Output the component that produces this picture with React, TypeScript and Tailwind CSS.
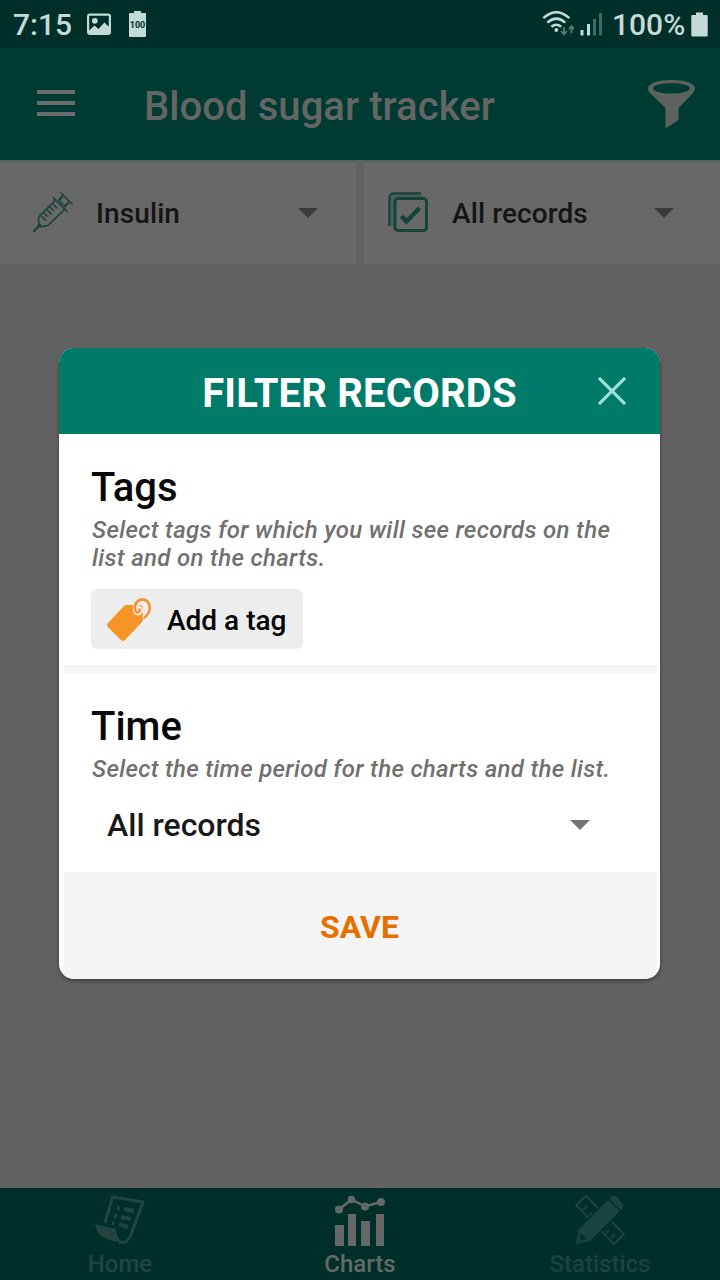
import React from "react";

function Caret({ className }: { className: string }) {
  return (
    <svg width="20" height="10" viewBox="0 0 20 10" className={className}>
      <path d="M0 0H20L10 10Z" fill="currentColor" />
    </svg>
  );
}

function StatusBar() {
  return (
    <div className="flex h-12 shrink-0 items-center justify-between bg-[#002e29] pr-[12px] pl-[13px] text-[#c4dad7]">
      <div className="flex items-center">
        <span className="w-[74px] pt-[2px] text-[30px] leading-[36px] font-medium">7:15</span>
        <svg width="24" height="23" viewBox="0 0 24 23">
          <path
            fillRule="evenodd"
            fill="currentColor"
            d="M3 0.5H21Q24 0.5 24 3.5V19Q24 22 21 22H3Q0 22 0 19V3.5Q0 0.5 3 0.5ZM2.2 2.7V17.5L7.5 12.6L11.4 16L17.4 9.6L21.8 13.8V2.7Z"
          />
          <circle cx="7.8" cy="7.8" r="2.9" fill="currentColor" />
        </svg>
        <div className="ml-[18px] flex flex-col items-center pb-px">
          <div className="h-[2px] w-[7px] bg-[#c4dad7]" />
          <div className="flex h-[24px] w-[17px] items-center justify-center rounded-[1px] bg-[#c4dad7] pt-px text-[9px] leading-none font-bold text-[#002e29]">
            100
          </div>
        </div>
      </div>
      <div className="flex items-center">
        <svg width="32" height="26" viewBox="0 0 32 26" fill="none" stroke="currentColor">
          <path d="M1.3 7.2Q14.3 -4.8 27.3 7.2" strokeWidth="2.5" />
          <path d="M5.3 11.6Q14.3 3.6 23.3 11.6" strokeWidth="2.5" />
          <path d="M9.4 15.8Q14.3 11.6 19.2 15.8" strokeWidth="2.5" />
          <circle cx="14.3" cy="19" r="1.9" fill="currentColor" stroke="none" />
          <path d="M22 16V23M19 20L22 23.3L25 20M29.5 22V15.5M26.8 18.2L29.5 15.2L32 18.2" stroke="#557b76" strokeWidth="1.8" />
        </svg>
        <svg width="23" height="24" viewBox="0 0 23 24" className="ml-[6px]">
          <rect x="0.5" y="18" width="3" height="5.5" fill="#c4dad7" />
          <rect x="7" y="12" width="3" height="11.5" fill="#c4dad7" />
          <rect x="13" y="7" width="3" height="16.5" fill="#406a65" />
          <rect x="19" y="1" width="3" height="22.5" fill="#406a65" />
        </svg>
        <span className="ml-[9px] w-[79px] pt-[2px] text-[30px] leading-[36px] font-medium whitespace-nowrap">100%</span>
        <svg width="17" height="25" viewBox="0 0 17 25">
          <path d="M5 0.5H12V3H15.5Q16.7 3 16.7 4.2V23Q16.7 24.5 15.5 24.5H1.5Q0.3 24.5 0.3 23V4.2Q0.3 3 1.5 3H5Z" fill="currentColor" />
        </svg>
      </div>
    </div>
  );
}

function Toolbar() {
  return (
    <div className="flex h-28 shrink-0 items-center bg-[#003b33] pr-[25px] pl-[37px] text-[#646664]">
      <div className="mb-[2px] flex w-[38px] flex-col gap-[7px]">
        <div className="h-1 bg-[#6b6d6b]" />
        <div className="h-1 bg-[#6b6d6b]" />
        <div className="h-1 bg-[#6b6d6b]" />
      </div>
      <h1 className="ml-[69px] flex-1 pt-[6px] text-[40px] leading-[48px] font-medium tracking-[0.06px] whitespace-nowrap">
        Blood sugar tracker
      </h1>
      <svg width="47" height="49" viewBox="0 0 47 49" fill="#5e625f">
        <path
          fillRule="evenodd"
          d="M23.5 0C36.5 0 47 3.4 47 8.3C47 10.5 45.8 12 44 14L30.5 28V40L17.5 48.5V28L3 14C1.2 12 0 10.5 0 8.3C0 3.4 10.5 0 23.5 0ZM23.5 3.2C13.2 3.2 5 5.2 5 8.3C5 11.4 13.2 13.6 23.5 13.6C33.8 13.6 42 11.4 42 8.3C42 5.2 33.8 3.2 23.5 3.2Z"
        />
      </svg>
    </div>
  );
}

function Syringe() {
  return (
    <svg width="40" height="40" viewBox="0 0 40 40" fill="none" stroke="#17433b" strokeWidth="1.6" strokeLinecap="round" className="ml-px">
      <path d="M1 39L7 33" strokeWidth="2.4" />
      <path d="M22 8.5L7 23.5Q4.5 26.5 6 30.5L5.5 33.5L7.5 35L10.5 34Q14 34.5 16 32.5L32 17" />
      <path d="M20.5 6L34 19.5M28 1L39 12M29 5.5L26 8.5M34.5 11L31.5 14M25.5 8L32.5 15" />
      <path d="M30 3.5L26.5 7M36.5 10L33 13.5" />
      <path d="M20 12L24 16M17 15L20 18M14 18L18 22M11 21L14 24M8.5 24L12.5 28" />
    </svg>
  );
}

function CheckPages() {
  return (
    <svg width="40" height="40" viewBox="0 0 40 40" fill="none" stroke="#17433b" strokeWidth="3">
      <path d="M33 1.5H6Q1.5 1.5 1.5 6V34" strokeWidth="2.4" />
      <path d="M4 34V8Q4 4 8 4H34" stroke="#3e625d" strokeWidth="2.6" />
      <rect x="7" y="6.5" width="31.5" height="32" rx="3" fill="#686868" />
      <path d="M13.5 24L18.5 29.5L31.5 16" strokeWidth="4.6" />
    </svg>
  );
}

function Selector({ icon, label }: { icon: React.ReactNode; label: string }) {
  return (
    <div className="flex flex-1 items-center pb-[2px] text-[28px] font-medium text-[#151515]">
      <div className="w-10">{icon}</div>
      <span className="ml-6 flex-1 pt-[3px] leading-8 tracking-[0.1px]">{label}</span>
      <Caret className="mt-[2px] text-[#3b3b3b]" />
    </div>
  );
}

function TagIcon() {
  return (
    <svg width="46" height="46" viewBox="0 0 46 46">
      <path
        fill="#f79427"
        d="M20.5 9H33.5Q37 9 37 13V23.5Q37 25 36 26L19 44Q17 45.7 15 44L1.7 31Q0 29 2 27L18 10Q19 9 20.5 9Z"
      />
      <circle cx="32" cy="14.5" r="5" fill="#ededed" />
      <path d="M37 22Q44 18 43.6 11Q42.5 3.6 36 3.4Q29.5 4.4 29.2 11Q29.2 16 32.2 15.8" fill="none" stroke="#ededed" strokeWidth="4.6" />
      <path d="M38.5 21.5Q44.4 17 43.6 10.5Q42.4 3.4 36 3.4Q29.2 4.4 29 11.5Q29 16.5 32 16.5Q34 16.3 33.6 13.5" fill="none" stroke="#ec963a" strokeWidth="2.6" strokeLinecap="round" />
    </svg>
  );
}

function FilterDialog() {
  return (
    <section className="absolute top-[348px] left-[59px] flex h-[631px] w-[601px] flex-col overflow-hidden rounded-[15px] bg-white shadow-[0_2px_4px_0px_rgba(0,0,0,0.4)]">
      <header className="flex h-[86px] items-center bg-[#007a69] pr-[34px] pl-[62px]">
        <h2 className="flex-1 pt-[6px] text-center text-[40px] leading-[48px] font-bold tracking-[0.2px] whitespace-nowrap text-white">
          FILTER RECORDS
        </h2>
        <svg width="28" height="28" viewBox="0 0 28 28">
          <path d="M1 1L27 27M27 1L1 27" stroke="#9de0d5" strokeWidth="3.2" />
        </svg>
      </header>
      <div className="flex h-[231px] flex-col items-start pt-[30px] pl-[33px]">
        <h3 className="-ml-px text-[40px] leading-[47px] font-medium text-[#080808]">Tags</h3>
        <p className="mt-[5px] text-[24px] leading-[28px] font-medium tracking-[0.33px] whitespace-nowrap text-[#707070] italic">
          Select tags for which you will see records on the
          <br />
          list and on the charts.
        </p>
        <button className="mt-[17px] -ml-px flex h-[60px] w-[212px] items-center rounded-[6px] bg-[#ededed] pl-[15px] text-[28px] font-medium text-black">
          <TagIcon />
          <span className="ml-[15px] pt-[3px] leading-8 whitespace-nowrap">Add a tag</span>
        </button>
      </div>
      <div className="mr-[3px] ml-[5px] h-2 bg-[#f4f4f4]" />
      <div className="flex h-[199px] flex-col pt-[30px] pl-[33px]">
        <h3 className="-ml-px text-[40px] leading-[47px] font-medium text-[#080808]">Time</h3>
        <p className="mt-[5px] text-[24px] leading-[28px] font-medium tracking-[0.31px] whitespace-nowrap text-[#707070] italic">
          Select the time period for the charts and the list.
        </p>
        <div className="mt-[23px] flex items-center justify-between pr-[70px] pl-[15px] text-[32px] leading-[38px] font-medium text-[#191919]">
          All records
          <Caret className="text-[#737373]" />
        </div>
      </div>
      <button className="mr-[3px] ml-[5px] flex-1 bg-[#f4f4f4] pt-[3px] pr-[2px] text-[32px] leading-[38px] font-bold text-[#e66f00]">
        SAVE
      </button>
    </section>
  );
}

function HomeIcon() {
  return (
    <svg width="50" height="50" viewBox="0 0 50 50" fill="none" stroke="currentColor" strokeWidth="3" strokeLinejoin="round">
      <path d="M10 28L17.5 2L48 7L35 42Q31 49 24 47" />
      <path d="M0 29L21 34Q22 45 28 47Q10 46 4 39Q1 35 0 29Z" fill="currentColor" stroke="none" />
      <path d="M22 13L25 13.5M29 14L39 16M19 21L22 21.5M26 22L36 24M17 28L19 28.5M24 29L33 32" strokeWidth="4" />
    </svg>
  );
}

function ChartsIcon() {
  return (
    <svg width="52" height="52" viewBox="0 0 52 52" fill="currentColor">
      <path d="M5 14.5L17.5 4.5L31 11.5L47 7" fill="none" stroke="currentColor" strokeWidth="2.5" />
      <circle cx="5" cy="14.5" r="4" />
      <circle cx="17.5" cy="4.5" r="3.8" />
      <circle cx="31" cy="11.5" r="4" />
      <circle cx="47" cy="7" r="4" />
      <path d="M1 30H10V51H1ZM14 19H22V51H14ZM27 26H36V51H27ZM42 19H50V51H42Z" />
    </svg>
  );
}

function StatisticsIcon() {
  return (
    <svg width="50" height="50" viewBox="0 0 50 50" fill="none" stroke="currentColor" strokeWidth="2.2" strokeLinejoin="round">
      <path d="M1 10L11 1L49 39L39 49Z" />
      <path d="M8 15L12 11M14 21L17 18M31 38L34 35M36 43L40 39" strokeWidth="2" />
      <path d="M36 1Q39 -1 42 1L48 8Q50 11 48 14L15 47L0 50L3 34Z" fill="currentColor" stroke="#002f29" strokeWidth="1.5" />
      <path d="M34 4.5L45.5 16" stroke="#002f29" strokeWidth="1.6" />
      <path d="M5 36L13.5 44.5L3 47.5Z" fill="#002f29" stroke="currentColor" strokeWidth="2" />
      <path d="M1 49L3 42L8 47Z" fill="currentColor" stroke="none" />
    </svg>
  );
}

function NavItem({ icon, label, color }: { icon: React.ReactNode; label: string; color: string }) {
  return (
    <div className={"flex flex-1 flex-col items-center " + color}>
      <div className="h-[52px]">{icon}</div>
      <span className="mt-[3px] text-[24px] leading-[28px] font-medium">{label}</span>
    </div>
  );
}

export default function App() {
  return (
    <div className="relative flex h-[1280px] w-[720px] flex-col overflow-hidden bg-[#626262] font-['Roboto',sans-serif]">
      <StatusBar />
      <Toolbar />
      <div className="flex h-[104px] shrink-0 gap-2">
        <div className="flex w-[356px] border-t-2 border-[#53615f] bg-[#686868] pr-[38px] pl-8">
          <Selector icon={<Syringe />} label="Insulin" />
        </div>
        <div className="flex flex-1 border-t-2 border-[#53615f] bg-[#686868] pr-[46px] pl-6">
          <Selector icon={<CheckPages />} label="All records" />
        </div>
      </div>
      <main className="flex-1" />
      <nav className="flex h-[92px] shrink-0 bg-[#002f29] pt-[7px]">
        <NavItem icon={<HomeIcon />} label="Home" color="text-[#21443f]" />
        <NavItem icon={<ChartsIcon />} label="Charts" color="text-[#646967]" />
        <NavItem icon={<StatisticsIcon />} label="Statistics" color="text-[#19433d]" />
      </nav>
      <FilterDialog />
    </div>
  );
}
